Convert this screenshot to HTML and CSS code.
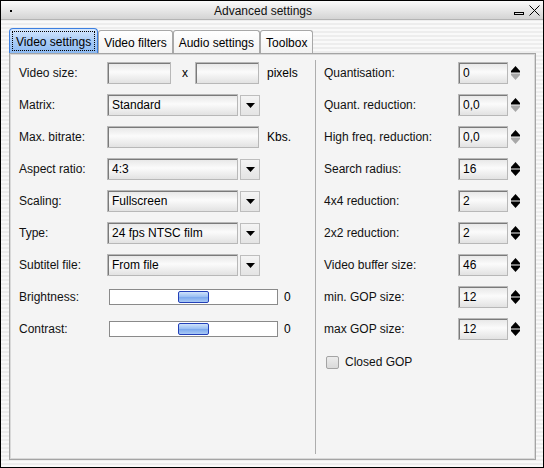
FILE: index.html
```html
<!DOCTYPE html>
<html>
<head>
<meta charset="utf-8">
<title>Advanced settings</title>
<link rel="stylesheet" href="styles.css">
</head>
<body>
<div class="window">
  <div class="titlebar">
    <div class="sys"><span class="sysdot"></span></div>
    <div class="title">Advanced settings</div>
    <div class="controls">
      <span class="min"></span>
      <svg class="close" width="11" height="11" viewBox="0 0 11 11"><path d="M0.5 0.5 L10.5 10.5 M10.5 0.5 L0.5 10.5" stroke="#000" stroke-width="1" fill="none"/></svg>
    </div>
  </div>
  <div class="body">
    <div class="tabs">
      <div class="tab active"><span class="focus">Video settings</span></div>
      <div class="tab">Video filters</div>
      <div class="tab">Audio settings</div>
      <div class="tab">Toolbox</div>
    </div>
    <div class="pane">
      <div class="col left">
        <div class="row">
          <span class="lbl">Video size:</span>
          <div class="field w64"></div>
          <span class="times">x</span>
          <div class="field w64"></div>
          <span class="unit">pixels</span>
        </div>
        <div class="row">
          <span class="lbl">Matrix:</span>
          <div class="field combo">Standard</div>
          <div class="dropbtn"><svg width="9" height="5" viewBox="0 0 9 5"><polygon points="0,0 9,0 4.5,5" fill="#000"/></svg></div>
        </div>
        <div class="row">
          <span class="lbl">Max. bitrate:</span>
          <div class="field w152"></div>
          <span class="unit">Kbs.</span>
        </div>
        <div class="row">
          <span class="lbl">Aspect ratio:</span>
          <div class="field combo">4:3</div>
          <div class="dropbtn"><svg width="9" height="5" viewBox="0 0 9 5"><polygon points="0,0 9,0 4.5,5" fill="#000"/></svg></div>
        </div>
        <div class="row">
          <span class="lbl">Scaling:</span>
          <div class="field combo">Fullscreen</div>
          <div class="dropbtn"><svg width="9" height="5" viewBox="0 0 9 5"><polygon points="0,0 9,0 4.5,5" fill="#000"/></svg></div>
        </div>
        <div class="row">
          <span class="lbl">Type:</span>
          <div class="field combo">24 fps NTSC film</div>
          <div class="dropbtn"><svg width="9" height="5" viewBox="0 0 9 5"><polygon points="0,0 9,0 4.5,5" fill="#000"/></svg></div>
        </div>
        <div class="row">
          <span class="lbl">Subtitel file:</span>
          <div class="field combo">From file</div>
          <div class="dropbtn"><svg width="9" height="5" viewBox="0 0 9 5"><polygon points="0,0 9,0 4.5,5" fill="#000"/></svg></div>
        </div>
        <div class="row">
          <span class="lbl">Brightness:</span>
          <div class="slider"><span class="handle"></span></div>
          <span class="sval">0</span>
        </div>
        <div class="row">
          <span class="lbl">Contrast:</span>
          <div class="slider"><span class="handle"></span></div>
          <span class="sval">0</span>
        </div>
      </div>
      <div class="divider"></div>
      <div class="col right">
        <div class="row">
          <span class="rlbl">Quantisation:</span>
          <div class="field spin">0</div>
          <svg class="arrows" width="11" height="22" viewBox="0 0 11 22"><polygon points="1,9 5.5,4 10,9" fill="#000"/><rect x="1" y="9" width="9" height="1.5" fill="#000"/><rect x="1" y="11.5" width="9" height="1.5" fill="#a8a8a8"/><polygon points="1,13 10,13 5.5,18" fill="#a8a8a8"/></svg>
        </div>
        <div class="row">
          <span class="rlbl">Quant. reduction:</span>
          <div class="field spin">0,0</div>
          <svg class="arrows" width="11" height="22" viewBox="0 0 11 22"><polygon points="1,9 5.5,4 10,9" fill="#000"/><rect x="1" y="9" width="9" height="1.5" fill="#000"/><rect x="1" y="11.5" width="9" height="1.5" fill="#a8a8a8"/><polygon points="1,13 10,13 5.5,18" fill="#a8a8a8"/></svg>
        </div>
        <div class="row">
          <span class="rlbl">High freq. reduction:</span>
          <div class="field spin">0,0</div>
          <svg class="arrows" width="11" height="22" viewBox="0 0 11 22"><polygon points="1,9 5.5,4 10,9" fill="#000"/><rect x="1" y="9" width="9" height="1.5" fill="#000"/><rect x="1" y="11.5" width="9" height="1.5" fill="#a8a8a8"/><polygon points="1,13 10,13 5.5,18" fill="#a8a8a8"/></svg>
        </div>
        <div class="row">
          <span class="rlbl">Search radius:</span>
          <div class="field spin">16</div>
          <svg class="arrows" width="11" height="22" viewBox="0 0 11 22"><polygon points="1,9 5.5,4 10,9" fill="#000"/><rect x="1" y="9" width="9" height="1.5" fill="#000"/><rect x="1" y="11.5" width="9" height="1.5" fill="#000"/><polygon points="1,13 10,13 5.5,18" fill="#000"/></svg>
        </div>
        <div class="row">
          <span class="rlbl">4x4 reduction:</span>
          <div class="field spin">2</div>
          <svg class="arrows" width="11" height="22" viewBox="0 0 11 22"><polygon points="1,9 5.5,4 10,9" fill="#000"/><rect x="1" y="9" width="9" height="1.5" fill="#000"/><rect x="1" y="11.5" width="9" height="1.5" fill="#000"/><polygon points="1,13 10,13 5.5,18" fill="#000"/></svg>
        </div>
        <div class="row">
          <span class="rlbl">2x2 reduction:</span>
          <div class="field spin">2</div>
          <svg class="arrows" width="11" height="22" viewBox="0 0 11 22"><polygon points="1,9 5.5,4 10,9" fill="#000"/><rect x="1" y="9" width="9" height="1.5" fill="#000"/><rect x="1" y="11.5" width="9" height="1.5" fill="#000"/><polygon points="1,13 10,13 5.5,18" fill="#000"/></svg>
        </div>
        <div class="row">
          <span class="rlbl">Video buffer size:</span>
          <div class="field spin">46</div>
          <svg class="arrows" width="11" height="22" viewBox="0 0 11 22"><polygon points="1,9 5.5,4 10,9" fill="#000"/><rect x="1" y="9" width="9" height="1.5" fill="#000"/><rect x="1" y="11.5" width="9" height="1.5" fill="#000"/><polygon points="1,13 10,13 5.5,18" fill="#000"/></svg>
        </div>
        <div class="row">
          <span class="rlbl">min. GOP size:</span>
          <div class="field spin">12</div>
          <svg class="arrows" width="11" height="22" viewBox="0 0 11 22"><polygon points="1,9 5.5,4 10,9" fill="#000"/><rect x="1" y="9" width="9" height="1.5" fill="#000"/><rect x="1" y="11.5" width="9" height="1.5" fill="#000"/><polygon points="1,13 10,13 5.5,18" fill="#000"/></svg>
        </div>
        <div class="row">
          <span class="rlbl">max GOP size:</span>
          <div class="field spin">12</div>
          <svg class="arrows" width="11" height="22" viewBox="0 0 11 22"><polygon points="1,9 5.5,4 10,9" fill="#000"/><rect x="1" y="9" width="9" height="1.5" fill="#000"/><rect x="1" y="11.5" width="9" height="1.5" fill="#000"/><polygon points="1,13 10,13 5.5,18" fill="#000"/></svg>
        </div>
        <div class="row">
          <span class="check"></span>
          <span class="checklbl">Closed GOP</span>
        </div>
      </div>
    </div>
  </div>
</div>
</body>
</html>
```
FILE: styles.css
```css
* { box-sizing: border-box; }
html, body { margin: 0; padding: 0; }
body {
  width: 544px;
  height: 468px;
  overflow: hidden;
  font-family: "Liberation Sans", Arial, sans-serif;
  font-size: 12px;
  color: #000;
  background: #fff;
}
.window {
  width: 544px;
  height: 468px;
  border: 1px solid #000;
  display: flex;
  flex-direction: column;
  background: repeating-linear-gradient(to bottom, #f9f9f9 0, #f9f9f9 2px, #ededed 2px, #ededed 4px);
}
.titlebar {
  flex: none;
  height: 19px;
  display: flex;
  align-items: center;
  background: linear-gradient(#fbfbfb, #d4d4d4);
  border-bottom: 1px solid #b4b4b4;
}
.sys { width: 19px; flex: none; display: flex; align-items: center; height: 100%; }
.sysdot { width: 2px; height: 2px; background: #000; margin-left: 9px; margin-top: 2px; }
.title { flex: 1; text-align: center; color: #111; padding-top: 1px; }
.controls {
  width: 37px;
  flex: none;
  display: flex;
  align-items: center;
  padding-left: 8px;
  height: 100%;
}
.min { width: 10px; height: 3px; border: 1px solid #000; margin-top: 7px; }
.close { margin-left: 5px; margin-top: 1px; display: block; }
.body {
  flex: 1;
  display: flex;
  flex-direction: column;
  padding: 8px 7px 7px 8px;
}
.tabs {
  flex: none;
  height: 25px;
  display: flex;
  align-items: flex-end;
}
.tab {
  height: 23px;
  padding: 1px 5px 0;
  border: 1px solid #a8a8a8;
  border-bottom: none;
  border-radius: 3px 3px 0 0;
  background: linear-gradient(#ffffff, #f2f2f2);
  display: flex;
  align-items: center;
  white-space: nowrap;
}
.tab.active {
  height: 25px;
  padding: 0 2px;
  border-color: #3d7fe0;
  border-radius: 4px 4px 0 0;
  background: linear-gradient(#d7e8fd, #a6caf6 55%, #8dbaf2);
}
.focus {
  border: 1px dotted #000;
  padding: 2px 3px 1px;
  height: 20px;
  display: flex;
  align-items: center;
}
.pane {
  flex: 1;
  display: flex;
  border: 1px solid #a4a4a4;
  box-shadow: inset 0 0 0 1px #d8d8d8;
  background: #f4f4f4;
}
.col { display: flex; flex-direction: column; }
.left { width: 305px; flex: none; padding: 3px 0 0 9px; }
.right { flex: 1; padding: 3px 0 0 8px; }
.divider {
  width: 1px;
  flex: none;
  background: #adadad;
  margin: 6px 0 5px 0;
}
.row {
  height: 32px;
  flex: none;
  display: flex;
  align-items: center;
  white-space: nowrap;
}
.lbl { width: 88px; flex: none; color: #111; }
.rlbl { width: 134px; flex: none; color: #111; }
.field {
  height: 22px;
  flex: none;
  border: 1px solid #b8b8b8;
  box-shadow: inset 1px 1px 0 #7a7a7a;
  background: linear-gradient(#e6e6e6, #fbfbfb 45%, #e2e2e2);
  padding: 0 4px;
  display: flex;
  align-items: center;
}
.w64 { width: 64px; }
.w152 { width: 152px; }
.combo { width: 131px; }
.spin { width: 50px; }
.times { margin: 0 7px 0 11px; }
.unit { margin-left: 8px; }
.dropbtn {
  width: 20px;
  height: 21px;
  flex: none;
  margin-left: 2px;
  border: 1px solid #bdbdbd;
  background: linear-gradient(#f4f4f4, #e4e4e4);
  display: flex;
  align-items: center;
  justify-content: center;
}
.dropbtn svg { display: block; }
.slider {
  width: 169px;
  height: 16px;
  flex: none;
  margin-left: 2px;
  border: 1px solid #8a8a8a;
  background: #fff;
  display: flex;
  align-items: center;
  justify-content: center;
}
.handle {
  width: 31px;
  height: 12px;
  border: 1px solid #2340b8;
  border-radius: 2px;
  background: linear-gradient(#cfe2fb, #9cc0f3 45%, #7eaaee 55%, #a9c9f5);
}
.sval { margin-left: 6px; }
.arrows { display: block; flex: none; margin-left: 2px; }
.check {
  width: 13px;
  height: 13px;
  flex: none;
  margin-left: 2px;
  margin-top: 2px;
  border: 1px solid #a4a4a4;
  border-radius: 2px;
  background: linear-gradient(#ececec, #dadada);
}
.checklbl { margin-left: 6px; margin-top: 1px; color: #111; }
```
